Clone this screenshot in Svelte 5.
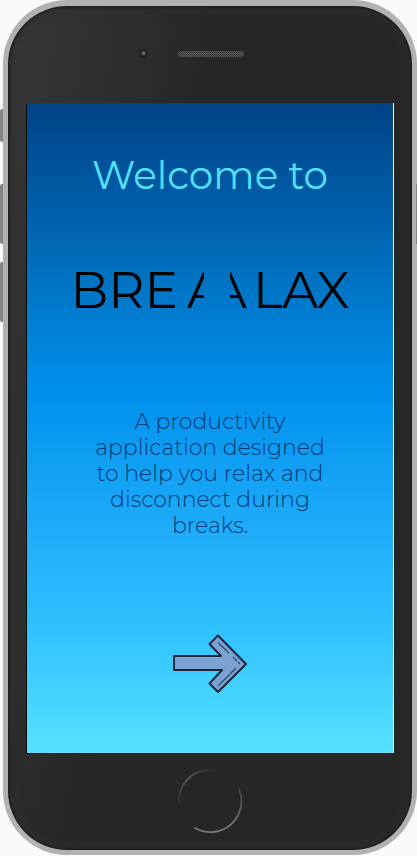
<script>
  let started = $state(false);
</script>

<div class="stage">
  <span class="key mute"></span>
  <span class="key up"></span>
  <span class="key down"></span>
  <span class="key power"></span>
  <div class="phone">
    <header class="top">
      <span class="camera"></span>
      <span class="speaker"></span>
    </header>

    <main class="screen">
      <h1>Welcome to</h1>
      <div class="logo">
        <span>BRE</span>
        <span class="half left">A</span>
        <span class="half right"><span>A</span></span>
        <span>LAX</span>
      </div>
      <p>A productivity application designed to help you relax and disconnect during breaks.</p>
      <button class="next" aria-label="Continue" aria-pressed={started} onclick={() => (started = true)}>
        <svg width="76" height="60" viewBox="0 0 76 60" fill="none">
          <path d="M2 23H49L37.500 11L46 2.500L74 31L46 59L37.500 50.500L50 37H2Z" fill="#7aa2d3" stroke="#20263a" stroke-width="2" stroke-linejoin="round" />
          <path d="M46 9.500L57 20M61 24L65 28M66 29L68 31M46 53L64 35" stroke="#3a496d" stroke-width="1.300" />
        </svg>
      </button>
    </main>

    <footer class="bottom">
      <button class="home" aria-label="Home">
        <svg width="66" height="66" viewBox="0 0 66 66" fill="none" stroke-width="1.800" stroke-linecap="round">
          <defs>
            <linearGradient id="arcTop" x1="0" y1="1" x2="1" y2="0">
              <stop offset="0" stop-color="#282828" />
              <stop offset=".5" stop-color="#5c5c5c" />
              <stop offset="1" stop-color="#282828" />
            </linearGradient>
            <linearGradient id="arcLow" x1="0" y1="1" x2="1" y2="0">
              <stop offset="0" stop-color="#777" />
              <stop offset=".5" stop-color="#777" />
              <stop offset="1" stop-color="#444" />
            </linearGradient>
          </defs>
          <path d="M1.500 39A31 31 0 0 1 38 2.500" stroke="url(#arcTop)" />
          <path d="M17 60A31 31 0 0 0 61 21" stroke="url(#arcLow)" />
        </svg>
      </button>
    </footer>
  </div>
</div>

<style>
  :global(body) {
    background: #fafafa;
  }

  .stage {
    position: relative;
    padding-left: 3px;
    overflow: hidden;
    font-family: Montserrat, Inter, sans-serif;
  }

  .key {
    position: absolute;
    left: 0;
    width: 3px;
    height: 60px;
    border-radius: 2px 0 0 2px;
    background: #858585;
  }

  .mute {
    top: 109px;
    height: 33px;
  }

  .up {
    top: 184px;
  }

  .down {
    top: 262px;
  }

  .power {
    top: 184px;
    right: 0;
    left: auto;
    z-index: 1;
    width: 1px;
    border-radius: 0;
  }

  .phone {
    box-sizing: border-box;
    padding: 0 18px 0 19px;
    border: 5px solid #b0b1b0;
    border-top-width: 6px;
    border-radius: 64px;
    background: linear-gradient(100deg, #373737, #262626 40%);
    box-shadow:
      inset 0 0 3px 1px #181818,
      inset 0 0 12px 3px #303030;
  }

  .top {
    display: grid;
    grid-template-columns: 1fr 66px 1fr;
    height: 97px;
  }

  .camera {
    justify-self: end;
    width: 5px;
    height: 5px;
    margin: 43px 30px 0 0;
    border: 2px solid #222029;
    border-radius: 50%;
    background: radial-gradient(circle at 50% 40%, #77767d, #35333c 70%);
  }

  .speaker {
    height: 6px;
    margin-top: 45px;
    border-radius: 3px;
    background: repeating-conic-gradient(#3b3b3b 0 25%, #565656 0 50%) 0 0 / 2px 2px;
  }

  .screen {
    display: flex;
    flex-direction: column;
    align-items: center;
    box-sizing: border-box;
    min-height: 650px;
    padding-top: 48px;
    border-right: 1px solid #fff;
    background: linear-gradient(
      #004286,
      #006bb8 23%,
      #0090ec 44%,
      #20aefa 67%,
      #30c2ff 81%,
      #57e1ff
    );
    box-shadow: -1px 1px 0 #0b0b0b;
    text-align: center;
  }

  h1 {
    margin: 0;
    color: #52e0ff;
    font-size: 39px;
    font-weight: 400;
    line-height: 48px;
  }

  .logo {
    display: flex;
    margin-top: 62px;
    color: #000;
    font-size: 50px;
    font-weight: 400;
    line-height: 60px;
  }

  .half {
    width: 17px;
    overflow: hidden;
  }

  .left {
    margin: 0 26px 0 9px;
    text-align: left;
  }

  .right {
    display: flex;
    justify-content: flex-end;
    margin-right: 6px;
  }

  p {
    width: 240px;
    margin: 88px 0 0;
    color: #003a76;
    font-size: 22px;
    font-weight: 300;
    line-height: 26px;
  }

  button {
    display: block;
    padding: 0;
    border: 0;
    background: none;
    cursor: pointer;
  }

  .next {
    margin-top: 94px;
  }

  svg {
    display: block;
  }

  .bottom {
    display: flex;
    justify-content: center;
    padding: 15px 0 16px;
  }
</style>
